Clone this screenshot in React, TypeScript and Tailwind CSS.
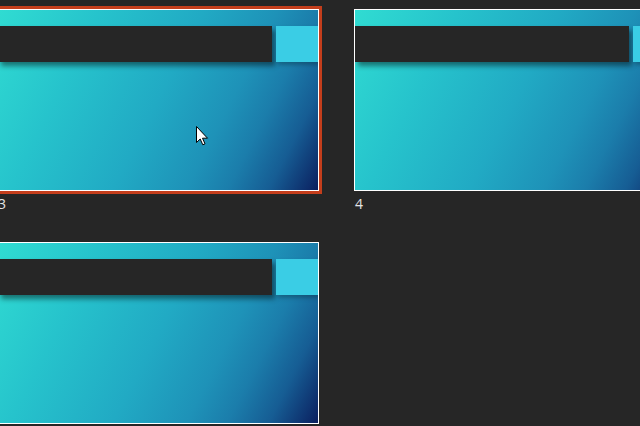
import React from 'react';

interface Slide {
  id: number;
  selected?: boolean;
}

const slides: Slide[] = [{ id: 3, selected: true }, { id: 4 }, { id: 5 }];

function Cursor() {
  return (
    <svg className="absolute left-[198px] top-[116px]" width="13" height="20" viewBox="0 0 13 20">
      <path
        d="M0.5 0.5 L0.5 16.5 L4.2 13 L6.8 18.8 L9 17.8 L6.5 12.2 L11.5 12.2 Z"
        fill="#ffffff"
        stroke="#000000"
        strokeWidth="1"
        strokeLinejoin="miter"
      />
    </svg>
  );
}

function SlideThumb({ slide, cursor }: { slide: Slide; cursor?: boolean }) {
  return (
    <div>
      <div className={`border-[3px] ${slide.selected ? 'border-[#c43e1c]' : 'border-transparent'}`}>
        <div className="border border-white">
          <div className="relative w-[320px] h-[180px] overflow-hidden bg-[linear-gradient(117deg,#30dcd2_0%,#26c3cc_25%,#21aac4_50%,#1e92b8_68%,#1b7dab_78%,#165d94_88%,#0b1f5f_100%)]">
            <div className="flex gap-[4px] mt-[16px] h-[36px]">
              <div className="w-[274px] shrink-0 bg-[#262626] shadow-[3px_4px_5px_rgba(0,0,0,0.45)]" />
              <div className="flex-1 bg-[#3acde5] shadow-[2px_3px_4px_rgba(0,0,0,0.25)]" />
            </div>
            {cursor && <Cursor />}
          </div>
        </div>
      </div>
      <p className="pl-[4px] mt-[1px] text-[14px] leading-[18px] text-[#e4e4e4] font-['Open_Sans','Noto_Sans',sans-serif]">
        {slide.id}
      </p>
    </div>
  );
}

export default function App() {
  return (
    <div className="w-[640px] h-[426px] overflow-hidden bg-[#262626]">
      <div className="-ml-[6px] pt-[6px] grid grid-cols-[328px_328px] gap-x-[29px] gap-y-[26px] w-max">
        {slides.map((s) => (
          <SlideThumb key={s.id} slide={s} cursor={s.selected} />
        ))}
      </div>
    </div>
  );
}
